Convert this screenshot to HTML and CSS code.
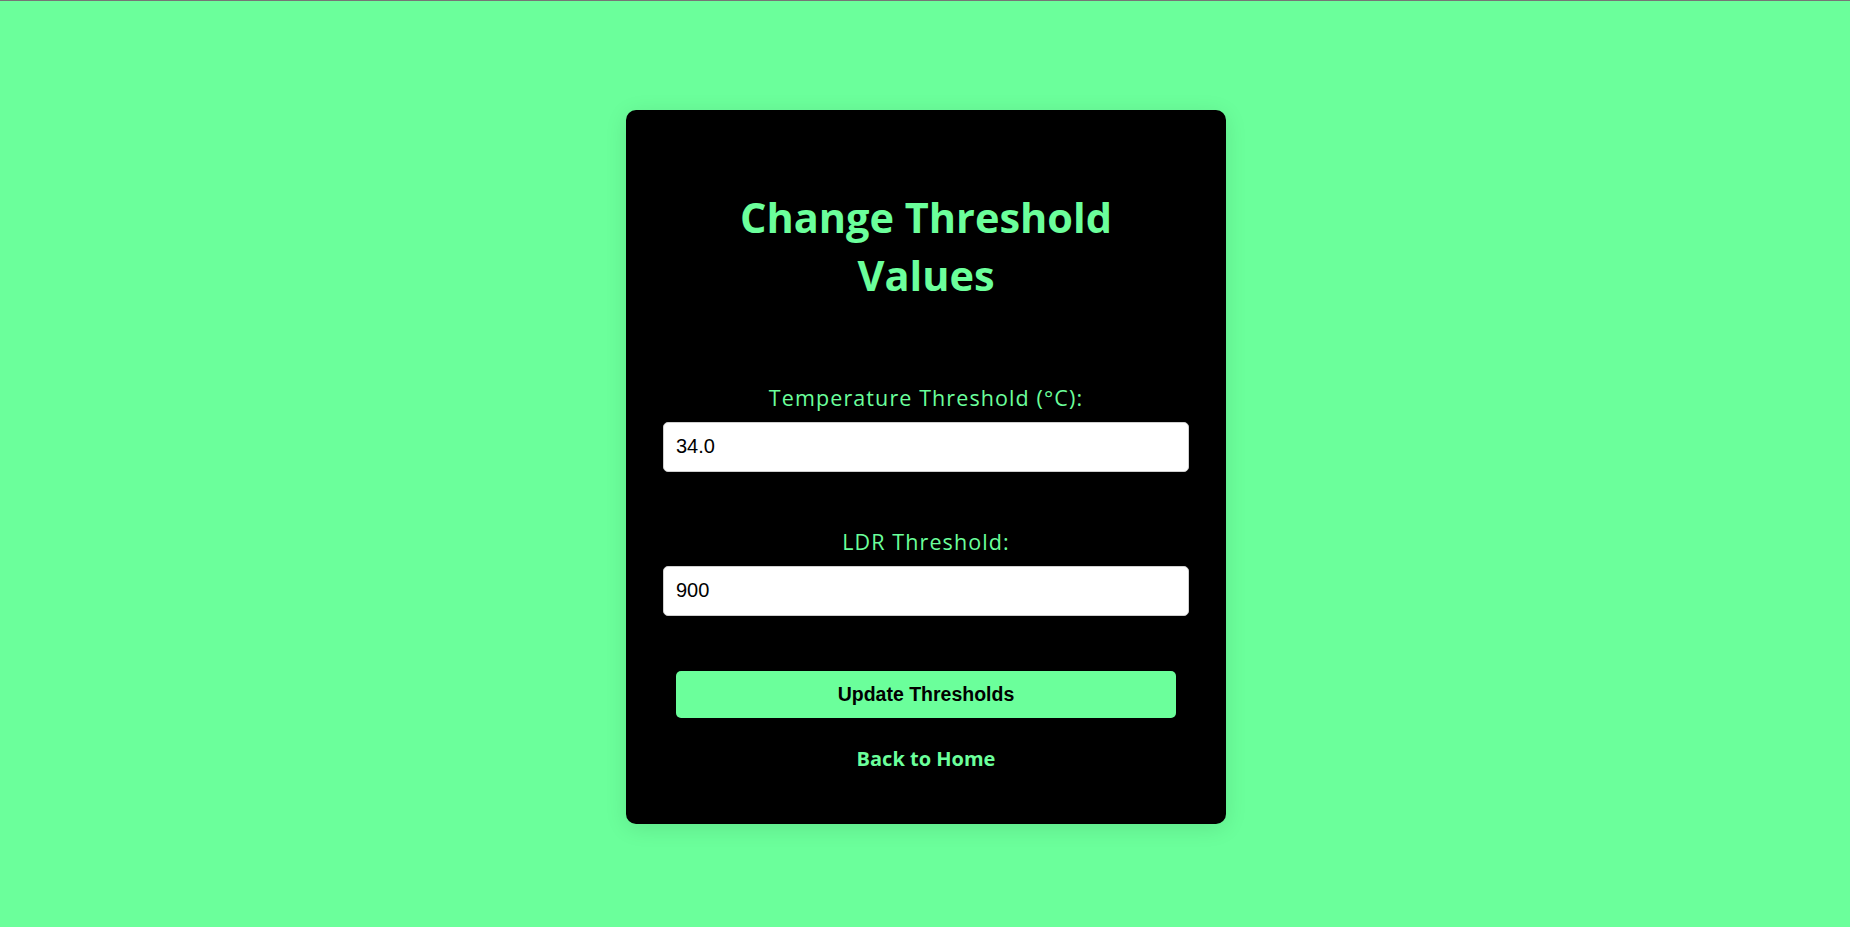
FILE: index.html
```html
<!DOCTYPE html>
<html lang="en">
<head>
<meta charset="utf-8">
<title>Change Threshold Values</title>
<link rel="stylesheet" href="styles.css">
</head>
<body>
  <main class="card">
    <h2 class="title">Change Threshold Values</h2>
    <form class="form">
      <div class="field">
        <label class="label" for="temp">Temperature Threshold (°C):</label>
        <input class="input" id="temp" type="text" value="34.0">
      </div>
      <div class="field">
        <label class="label" for="ldr">LDR Threshold:</label>
        <input class="input" id="ldr" type="text" value="900">
      </div>
      <button class="btn" type="button">Update Thresholds</button>
    </form>
    <div class="back"><a class="back-link" href="#">Back to Home</a></div>
  </main>
</body>
</html>
```
FILE: styles.css
```css
html, body {
  margin: 0;
  padding: 0;
}
body {
  min-height: 100vh;
  box-sizing: border-box;
  padding-top: 6px;
  padding-left: 2px;
  background: #6bff9b;
  box-shadow: inset 0 1px 0 #767676;
  display: flex;
  align-items: center;
  justify-content: center;
  font-family: "Open Sans", "Liberation Sans", sans-serif;
}
.card {
  width: 600px;
  box-sizing: border-box;
  padding: 40px 37px;
  background: #000;
  border-radius: 10px;
  box-shadow: 0 4px 22px rgba(0, 0, 0, 0.1);
  text-align: center;
}
.title {
  margin: 38px auto 79px;
  width: 420px;
  font-size: 41.5px;
  line-height: 58px;
  font-weight: 700;
  color: #6bff9b;
}
.form {
  display: flex;
  flex-direction: column;
}
.field {
  display: flex;
  flex-direction: column;
}
.field + .field {
  margin-top: 55px;
}
.label {
  display: block;
  font-size: 21.5px;
  line-height: 30px;
  letter-spacing: 1.1px;
  color: #6bff9b;
  margin-bottom: 9px;
}
.input {
  display: block;
  width: 100%;
  height: 50px;
  box-sizing: border-box;
  margin: 0;
  padding: 0 12px;
  border: 1px solid #cfcfcf;
  border-radius: 5px;
  background: #fff;
  font-family: "Liberation Sans", Arial, sans-serif;
  font-size: 20px;
  color: #000;
  outline: none;
}
.btn {
  align-self: center;
  width: 95%;
  height: 47px;
  margin-top: 55px;
  border: none;
  border-radius: 5px;
  background: #6bff9b;
  color: #000;
  font-family: "Liberation Sans", Arial, sans-serif;
  font-weight: 700;
  font-size: 19.5px;
  cursor: pointer;
}
.back {
  margin: 27px 0 10px;
  line-height: 28px;
}
.back-link {
  font-size: 20px;
  font-weight: 700;
  color: #6bff9b;
  text-decoration: none;
}
```
